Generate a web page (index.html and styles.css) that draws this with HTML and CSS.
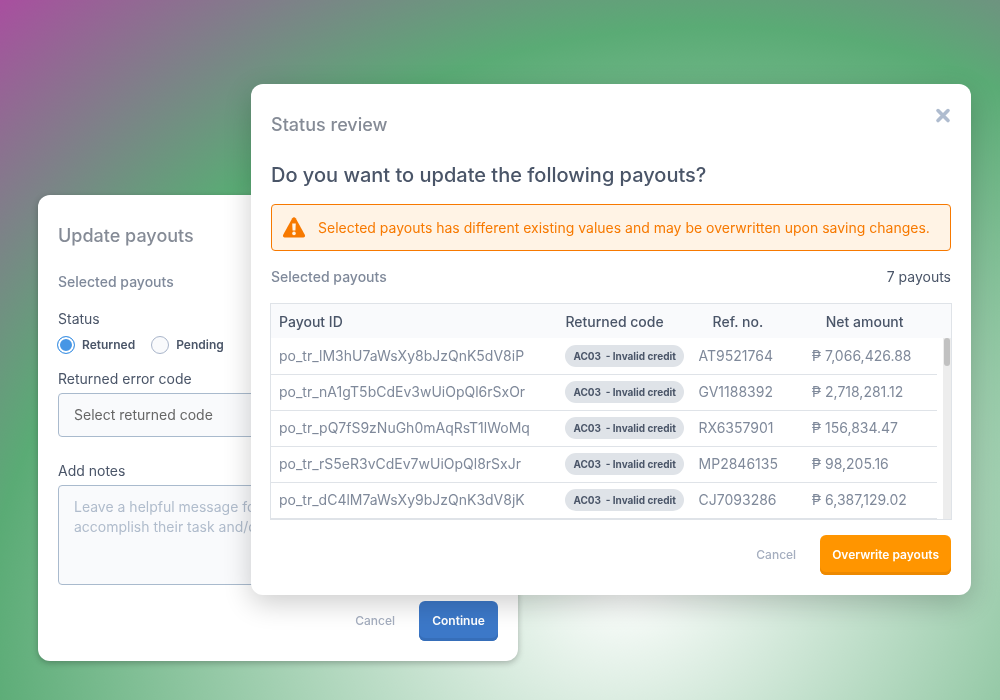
FILE: index.html
```html
<!DOCTYPE html>
<html lang="en">
<head>
    <meta charset="UTF-8">
    <meta name="viewport" content="width=device-width, initial-scale=1.0">
    <link rel="stylesheet" href="styles.css">
    <title>Update payouts</title>
</head>
<body>
    <main class="stage">
        <section class="modal update-modal">
            <h1>Update payouts</h1>
            <p class="muted">Selected payouts</p>

            <form id="update-form" action="javascript:void(0)">
                <fieldset>
                    <legend>Status</legend>
                    <div class="radios">
                        <label><input type="radio" name="status" value="returned" checked> Returned</label>
                        <label><input type="radio" name="status" value="pending"> Pending</label>
                    </div>
                </fieldset>

                <label for="error-code">Returned error code</label>
                <select id="error-code" name="errorCode">
                    <option>Select returned code</option>
                    <option>AC03 - Invalid credit</option>
                </select>

                <label for="notes">Add notes</label>
                <textarea id="notes" name="notes" placeholder="Leave a helpful message for your team to
accomplish their task and/or follow up"></textarea>

                <div class="actions">
                    <button type="button" class="btn-link">Cancel</button>
                    <button type="submit" class="btn btn-blue">Continue</button>
                </div>
            </form>
        </section>

        <section class="modal review-modal">
            <div class="review-header">
                <h1>Status review</h1>
                <button type="button" class="close" aria-label="Close">
                    <svg width="16" height="16" viewBox="0 0 16 16">
                        <path d="M3 2.6L13 12.6M13 2.6L3 12.6" fill="none" stroke="#afbccf" stroke-width="3.6" stroke-linecap="round"/>
                    </svg>
                </button>
            </div>
            <h2>Do you want to update the following payouts?</h2>

            <div class="alert">
                <svg width="24" height="21" viewBox="0 0 24 21">
                    <path d="M10.3 1.3Q12 -0.8 13.7 1.3L22.8 17.8Q23.7 20.4 21.4 20.5H2.6Q0.3 20.4 1.2 17.8Z" fill="#f77900"/>
                    <path d="M10.2 6.6h3.6l-.4 7h-2.8z" fill="#fff3e5"/>
                    <circle cx="12" cy="16.4" r="1.8" fill="#fff3e5"/>
                </svg>
                <p>Selected payouts has different existing values and may be overwritten upon saving changes.</p>
            </div>

            <div class="summary">
                <span class="muted">Selected payouts</span>
                <span>7 payouts</span>
            </div>

            <!-- Payouts table -->
            <div class="table-box">
                <table>
                    <thead>
                        <tr>
                            <th class="col-id">Payout ID</th>
                            <th class="col-code">Returned code</th>
                            <th class="col-ref">Ref. no.</th>
                            <th class="col-amount">Net amount</th>
                        </tr>
                    </thead>
                    <tbody>
                        <tr>
                            <td>po_tr_lM3hU7aWsXy8bJzQnK5dV8iP</td>
                            <td><span class="tag">AC03&nbsp; - Invalid credit</span></td>
                            <td>AT9521764</td>
                            <td>₱ 7,066,426.88</td>
                        </tr>
                        <tr>
                            <td>po_tr_nA1gT5bCdEv3wUiOpQl6rSxOr</td>
                            <td><span class="tag">AC03&nbsp; - Invalid credit</span></td>
                            <td>GV1188392</td>
                            <td>₱ 2,718,281.12</td>
                        </tr>
                        <tr>
                            <td>po_tr_pQ7fS9zNuGh0mAqRsT1lWoMq</td>
                            <td><span class="tag">AC03&nbsp; - Invalid credit</span></td>
                            <td>RX6357901</td>
                            <td>₱ 156,834.47</td>
                        </tr>
                        <tr>
                            <td>po_tr_rS5eR3vCdEv7wUiOpQl8rSxJr</td>
                            <td><span class="tag">AC03&nbsp; - Invalid credit</span></td>
                            <td>MP2846135</td>
                            <td>₱ 98,205.16</td>
                        </tr>
                        <tr>
                            <td>po_tr_dC4lM7aWsXy9bJzQnK3dV8jK</td>
                            <td><span class="tag">AC03&nbsp; - Invalid credit</span></td>
                            <td>CJ7093286</td>
                            <td>₱ 6,387,129.02</td>
                        </tr>
                    </tbody>
                </table>
                <div class="scrollbar"><div class="thumb"></div></div>
            </div>

            <div class="actions">
                <button type="button" class="btn-link">Cancel</button>
                <button type="button" class="btn btn-orange">Overwrite payouts</button>
            </div>
        </section>
    </main>
</body>
</html>
```

FILE: styles.css
```css
* {
    box-sizing: border-box;
}

body {
    font-family: "Inter", "Open Sans", sans-serif;
    font-size: 14px;
    line-height: 20px;
    color: #4a5568;
    margin: 0;
    min-height: 100vh;
}

/* tilted glow behind the dialogs, centred at 63% 83% of the window */
body::before {
    content: "";
    position: fixed;
    z-index: -1;
    left: -87vw;
    top: -67vh;
    width: 300vw;
    height: 300vh;
    background: radial-gradient(ellipse 66vw 77vh at center, #fff 0%, #5aab75 100%, #a84f9f 153%);
    transform: rotate(-20deg);
}

h1, h2, p {
    margin: 0;
    font-weight: 500;
}

button, select, textarea {
    font: inherit;
}

/* the two dialogs share one row so that the review overlaps the form */
.stage {
    display: grid;
    grid-template-columns: 38fr 213fr 267fr 453fr 29fr;
    align-items: start;
    padding-top: 84px;
}

.modal {
    background: #fff;
    border-radius: 12px;
    padding: 20px;
}

.update-modal {
    grid-column: 2 / 4;
    grid-row: 1;
    margin-top: 111px;
    padding-top: 28px;
    box-shadow: 0 2px 6px rgba(0, 0, 0, 0.25);
}

.review-modal {
    grid-column: 3 / 5;
    grid-row: 1;
    box-shadow: 0 8px 28px rgba(0, 0, 0, 0.2);
}

h1 {
    font-size: 18px;
    line-height: 26px;
    color: #858b96;
}

h2 {
    font-size: 20px;
    line-height: 26px;
    margin: 24px 0 16px;
}

.muted {
    color: #7f899a;
    font-weight: 500;
}

.update-modal .muted {
    margin: 23px 0 17px;
}

fieldset {
    border: 0;
    margin: 0 0 14px;
    padding: 0;
}

legend {
    padding: 0;
}

.radios {
    display: flex;
    gap: 16px;
    margin: 6px 0 0 -1px;
    font-size: 12px;
    font-weight: 600;
}

.radios label {
    display: flex;
    align-items: center;
    gap: 7px;
}

input[type="radio"] {
    appearance: none;
    width: 18px;
    height: 18px;
    margin: 0;
    border: 1px solid #a9b5ca;
    border-radius: 50%;
    background: #f9fafc;
}

input[type="radio"]:checked {
    border-color: #4696e5;
    background: #4696e5;
    box-shadow: inset 0 0 0 2px #fff;
}

form > label {
    display: block;
}

select,
textarea {
    appearance: none;
    display: block;
    width: 100%;
    border: 1px solid #a9bacd;
    border-radius: 4px;
    background: #f9fafc;
    color: #666;
    padding: 0 15px;
}

select {
    height: 44px;
    margin: 4px 0 24px;
}

textarea {
    height: 100px;
    margin-top: 4px;
    padding-top: 11px;
    resize: none;
}

textarea::placeholder {
    color: #b0bccc;
}

.actions {
    display: flex;
    justify-content: flex-end;
    align-items: center;
    gap: 24px;
    margin-top: 16px;
}

.btn,
.btn-link {
    border: 0;
    padding: 0;
    font-size: 12px;
    font-weight: 500;
    cursor: pointer;
}

.btn-link {
    background: none;
    color: #a5aebf;
}

.btn {
    height: 40px;
    min-width: 79px;
    padding: 0 12px;
    border-radius: 6px;
    color: #fff;
    font-weight: 600;
}

.btn-blue {
    background: #3c78c8;
    box-shadow: inset 0 -3px #366eb9;
}

.btn-orange {
    background: #ff9500;
    box-shadow: inset 0 -3px #ed8900;
}

.review-header {
    display: flex;
    justify-content: space-between;
}

.review-header h1 {
    margin-top: 8px;
}

.close {
    align-self: flex-start;
    display: flex;
    border: 0;
    padding: 4px 0;
    background: none;
    cursor: pointer;
}

.alert {
    display: flex;
    align-items: center;
    gap: 12px;
    padding: 12px 10px;
    border: 1px solid #f77900;
    border-radius: 4px;
    background: #fff3e5;
    color: #f77900;
}

.alert svg {
    flex: none;
}

.alert p {
    font-weight: 400;
}

.summary {
    display: flex;
    justify-content: space-between;
    margin: 16px 0;
}

.table-box {
    display: grid;
    grid-template-columns: 1fr 8px;
    column-gap: 6px;
    margin: 0 -1px;
    border: 1px solid #dfe3e8;
    background: linear-gradient(#f9fafc 34px, #fff 34px);
}

table {
    width: 100%;
    table-layout: fixed;
    border-collapse: collapse;
}

th, td {
    padding: 0 8px;
    text-align: left;
    white-space: nowrap;
}

th {
    height: 34px;
    padding-top: 2px;
    font-weight: 500;
}

td {
    height: 36px;
    color: #7f899a;
    border-bottom: 1px solid #dfe3e8;
}

.col-id {
    width: 43%;
}

.col-code {
    width: 20%;
}

.col-ref {
    width: 17%;
}

.col-ref,
.col-amount {
    padding-left: 22px;
}

.tag {
    display: block;
    width: fit-content;
    padding: 0 8px;
    border-radius: 11px;
    background: #dfe3e8;
    color: #4a5568;
    font-size: 10px;
    font-weight: 700;
    line-height: 22px;
}

.scrollbar {
    margin-top: 34px;
    background: #ededed;
}

.thumb {
    width: 6px;
    height: 28px;
    margin: 0 auto;
    border-radius: 3px;
    background: #c1c1c1;
}

.review-modal .actions {
    margin-top: 15px;
}
```
